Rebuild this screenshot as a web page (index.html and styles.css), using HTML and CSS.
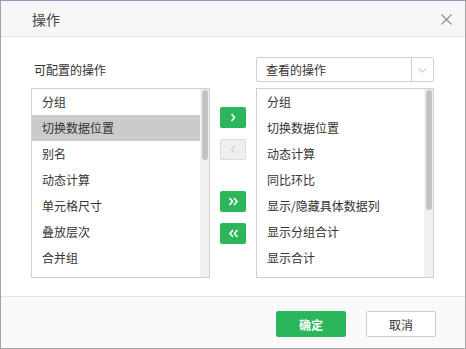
FILE: index.html
```html
<!DOCTYPE html>
<html lang="zh">
<head>
<meta charset="utf-8">
<link rel="stylesheet" href="styles.css">
</head>
<body>
<div class="dialog">
  <div class="header">
    <span class="title">操作</span>
    <svg class="close" width="11" height="11" viewBox="0 0 11 11"><path d="M0.5 0.5L10.5 10.5M10.5 0.5L0.5 10.5" stroke="#8a8a8a" stroke-width="1.1" fill="none"/></svg>
  </div>
  <div class="body">
    <div class="label">可配置的操作</div>
    <div></div>
    <div class="select">
      <span class="select-text">查看的操作</span>
      <span class="select-arrow"><svg width="9" height="5" viewBox="0 0 9 5"><path d="M0.5 0.5L4.5 4.2L8.5 0.5" stroke="#b8b8b8" stroke-width="1" fill="none"/></svg></span>
    </div>
    <div class="list">
      <div class="items">
        <div class="item">分组</div>
        <div class="item selected">切换数据位置</div>
        <div class="item">别名</div>
        <div class="item">动态计算</div>
        <div class="item">单元格尺寸</div>
        <div class="item">叠放层次</div>
        <div class="item">合并组</div>
      </div>
      <div class="track"><div class="thumb thumb-left"></div></div>
    </div>
    <div class="buttons">
      <div class="btn green"><svg width="6" height="9" viewBox="0 0 6 9"><path d="M1.5 1L4.5 4.5L1.5 8" stroke="#fff" stroke-width="1.6" fill="none"/></svg></div>
      <div class="btn disabled"><svg width="6" height="9" viewBox="0 0 6 9"><path d="M4.5 1L1.5 4.5L4.5 8" stroke="#c8c8c8" stroke-width="1.1" fill="none"/></svg></div>
      <div class="btn green gap-top"><svg width="11" height="9" viewBox="0 0 11 9"><path d="M1.5 1L4.5 4.5L1.5 8M6 1L9 4.5L6 8" stroke="#fff" stroke-width="1.6" fill="none"/></svg></div>
      <div class="btn green"><svg width="11" height="9" viewBox="0 0 11 9"><path d="M5 1L2 4.5L5 8M9.5 1L6.5 4.5L9.5 8" stroke="#fff" stroke-width="1.6" fill="none"/></svg></div>
    </div>
    <div class="list">
      <div class="items">
        <div class="item">分组</div>
        <div class="item">切换数据位置</div>
        <div class="item">动态计算</div>
        <div class="item">同比环比</div>
        <div class="item">显示/隐藏具体数据列</div>
        <div class="item">显示分组合计</div>
        <div class="item">显示合计</div>
      </div>
      <div class="track"><div class="thumb thumb-right"></div></div>
    </div>
  </div>
  <div class="footer">
    <div class="fbtn ok">确定</div>
    <div class="fbtn cancel">取消</div>
  </div>
</div>
</body>
</html>
```

FILE: styles.css
```css
* { box-sizing: border-box; }
html, body { margin: 0; padding: 0; }
body {
  font-family: "Noto Sans CJK SC", "Noto Sans", sans-serif;
  color: #333;
  background: #fff;
}
.dialog {
  width: 466px;
  height: 349px;
  border: 1px solid #a6a6a6;
  border-top-color: #8a9bbd;
  border-left-color: #9aa5bd;
  display: flex;
  flex-direction: column;
  background: #fff;
}
.header {
  height: 36px;
  background: #f7f7f7;
  border-bottom: 1px solid #e3e3e3;
  display: flex;
  align-items: center;
  justify-content: space-between;
  padding: 0 13px 0 31px;
  flex: none;
}
.title { font-size: 14px; line-height: 16px; color: #444; }
.close { display: block; margin-top: 1px; }
.body {
  flex: 1;
  padding: 20px 0 0 30px;
  display: grid;
  grid-template-columns: 179px 46px 178px;
  grid-template-rows: 25px 190px;
  row-gap: 6px;
  align-content: start;
}
.label {
  font-size: 12px;
  line-height: 14px;
  padding: 6px 0 0 3px;
  color: #333;
}
.select {
  border: 1px solid #d0d0d0;
  border-radius: 2px;
  display: flex;
  align-items: stretch;
}
.select-text {
  flex: 1;
  font-size: 12px;
  line-height: 23px;
  padding-left: 9px;
}
.select-arrow {
  width: 22px;
  border-left: 1px solid #d0d0d0;
  display: flex;
  align-items: center;
  justify-content: center;
  padding-top: 1px;
}
.select-arrow svg { display: block; }
.list {
  border: 1px solid #cfcfcf;
  display: flex;
  overflow: hidden;
}
.items { flex: 1; padding-top: 0; }
.item {
  height: 26px;
  line-height: 26px;
  font-size: 12px;
  padding-left: 10px;
  white-space: nowrap;
  color: #333;
}
.item.selected { background: #cbcbcb; }
.track {
  width: 9px;
  background: #f0f0f0;
  padding: 1px 0 0 2px;
}
.thumb {
  width: 6px;
  background: #c2c2c2;
  border-radius: 3px;
}
.thumb-left { height: 70px; }
.thumb-right { height: 120px; }
.buttons {
  display: flex;
  flex-direction: column;
  align-items: flex-start;
  padding: 19px 0 0 10px;
  gap: 11px;
}
.btn {
  width: 26px;
  height: 21px;
  border-radius: 2px;
  display: flex;
  align-items: center;
  justify-content: center;
}
.btn svg { display: block; }
.btn.green { background: #2bb65b; }
.btn.disabled { background: #efefef; border: 1px solid #dcdcdc; }
.btn.gap-top { margin-top: 20px; }
.footer {
  height: 52px;
  flex: none;
  background: #fafafa;
  border-top: 1px solid #e3e3e3;
  display: flex;
  justify-content: flex-end;
  align-items: flex-start;
  padding: 14px 29px 0 0;
  gap: 20px;
}
.fbtn {
  width: 70px;
  height: 26px;
  border-radius: 2px;
  font-size: 12px;
  display: flex;
  align-items: center;
  justify-content: center;
}
.fbtn.ok { background: #2bb65b; color: #fff; font-weight: bold; }
.fbtn.cancel { background: #fff; border: 1px solid #cdcdcd; color: #333; }
```
